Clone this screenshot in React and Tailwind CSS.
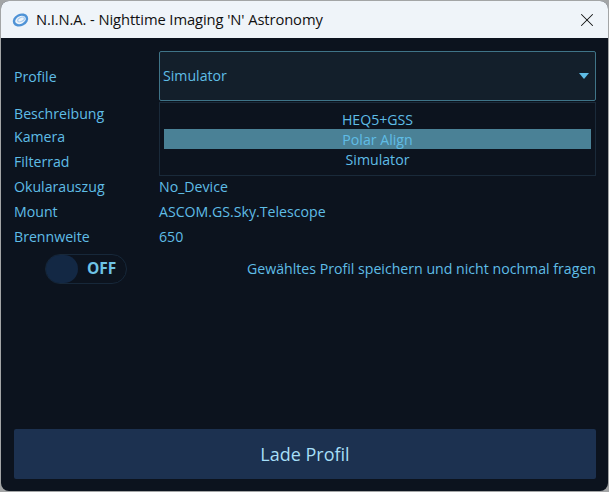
import { X } from "lucide-react";

const font = { fontFamily: '"Open Sans", sans-serif' };

// Logo drawn as small swirl
function Logo() {
    return (
        <svg width="17" height="16" viewBox="0 0 17 16" fill="none" className="shrink-0">
            <ellipse cx="8.5" cy="8" rx="6.8" ry="5" transform="rotate(-25 8.5 8)" stroke="#4f93d6" strokeWidth="2.4" />
            <ellipse cx="9" cy="7.5" rx="3.6" ry="2" transform="rotate(-25 9 7.5)" stroke="#a9cdf0" strokeWidth="1.2" />
        </svg>
    );
}

function InfoRow({ label, value, className }) {
    return (
        <div className={`flex items-center ${className}`}>
            <span className="w-[145px] shrink-0">{label}</span>
            <span>{value}</span>
        </div>
    );
}

export default function App() {
    return (
        <div className="w-[609px] h-[492px] bg-[#a3a5a6] overflow-hidden" style={font}>
            <div className="ml-px mt-px w-[607px] h-[490px] rounded-t-lg rounded-b-lg overflow-hidden flex flex-col bg-[#0c131e]">
                {/* Title bar */}
                <div className="h-[37px] shrink-0 bg-[#eff4f9] flex items-center pl-[11px] text-[14.75px] text-[#111]">
                    <Logo />
                    <span className="ml-[7px] tracking-[-0.1px]">N.I.N.A. - Nighttime Imaging 'N' Astronomy</span>
                    <X className="ml-auto mr-[10px] text-[#111]" size={22} strokeWidth={1.1} />
                </div>

                {/* Body */}
                <div className="relative flex-1 flex flex-col pl-[13px] pr-[12px] text-[14.15px] text-[#5fbde6]">
                    <div className="flex items-center mt-[13px] h-[50px]">
                        <span className="w-[145px] shrink-0 pt-[2px]">Profile</span>
                        <div className="flex-1 h-full bg-[#131f2b] border border-[#3f7488] rounded-[2px] flex items-center pl-[3px] pr-[6px]">
                            <span>Simulator</span>
                            <span className="ml-auto mb-[1px] w-0 h-0 border-x-[5px] border-x-transparent border-t-[6px] border-t-[#5fbde6]" />
                        </div>
                    </div>

                    <InfoRow label="Beschreibung" value="" className="mt-[1px] h-[23px]" />
                    <InfoRow label="Kamera" value="" className="h-[23px]" />
                    <InfoRow label="Filterrad" value="" className="h-[26px] pt-[2px]" />
                    <InfoRow label="Okularauszug" value="No_Device" className="h-[25px]" />
                    <InfoRow label="Mount" value="ASCOM.GS.Sky.Telescope" className="h-[25px]" />
                    <InfoRow label="Brennweite" value="650" className="h-[25px]" />

                    <div className="flex items-center justify-between mt-[5px] h-[30px]">
                        <div className="ml-[31px] w-[82px] h-[30px] rounded-full border border-[#17283a] flex items-center">
                            <span className="w-[32px] h-[28px] rounded-full bg-[#132844]" />
                            <span className="ml-[9px] font-bold text-[15.5px] text-[#6ec3e6]">OFF</span>
                        </div>
                        <span>Gewähltes Profil speichern und nicht nochmal fragen</span>
                    </div>

                    <button className="mt-auto mb-[12px] h-[50px] w-full rounded-[2px] bg-[#1c3150] text-[#a6dff7] text-[18px]">
                        Lade Profil
                    </button>

                    {/* Open dropdown list */}
                    <div className="absolute left-[158px] top-[64px] w-[437px] h-[74px] bg-[#0c131e] border border-[#1a2a3a] px-[4px] pt-[6px] text-center">
                        <div className="h-[20px] leading-[22px]">HEQ5+GSS</div>
                        <div className="h-[20px] leading-[22px] bg-[#4a8196]">Polar Align</div>
                        <div className="h-[20px] leading-[22px]">Simulator</div>
                    </div>
                </div>
            </div>
        </div>
    );
}
